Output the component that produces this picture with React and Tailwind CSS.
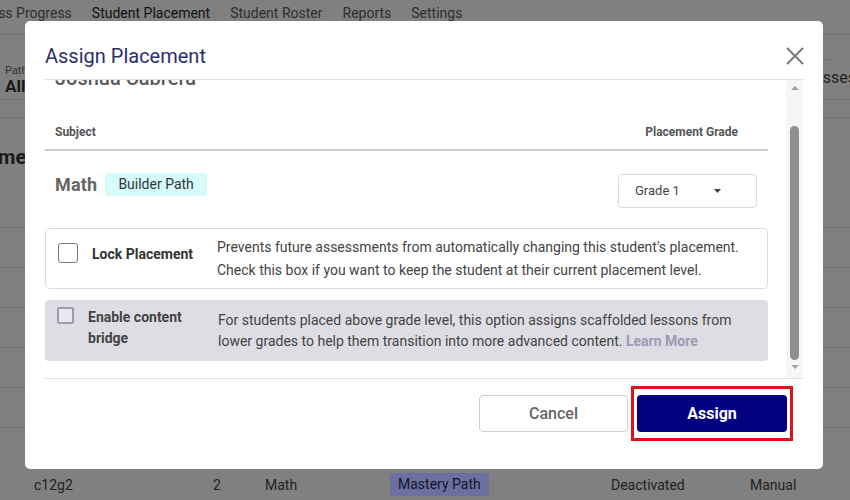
export default function App() {
  return (
    <div className="relative w-[850px] h-[500px] overflow-hidden bg-[#808080] font-['Roboto',sans-serif]">
      {/* background page (dimmed) */}
      <div className="flex flex-col h-full">
        <div className="h-[35px] shrink-0 border-b border-[#707070] flex items-start gap-5 -ml-[22px] pt-[4px] text-[14px] leading-[18px] text-[#2e2e2e] whitespace-nowrap">
          <span>Class Progress</span>
          <span className="text-[#111]">Student Placement</span>
          <span>Student Roster</span>
          <span>Reports</span>
          <span>Settings</span>
        </div>
        <div className="h-[65px] shrink-0 border-b border-[#707070] flex justify-between">
          <div className="pl-[5px] pt-[29px] flex flex-col">
            <span className="text-[11px] leading-[13px] text-[#333]">Path</span>
            <span className="text-[17px] leading-[18px] font-bold text-[#1a1a1a]">All</span>
          </div>
          <div className="flex flex-col">
            <div className="h-[25px] border-b border-[#707070] w-[30px]" />
            <span className="pt-[8px] -mr-[6px] text-[16px] leading-[20px] text-[#222]">Classes</span>
          </div>
        </div>
        <div className="h-[18px] shrink-0 border-b border-[#707070]" />
        <div className="h-[110px] shrink-0 border-b border-[#707070] pt-[25px] -ml-[52px] whitespace-nowrap">
          <span className="text-[20px] leading-[28px] font-bold text-[#1a1a1a]">Placement Summary</span>
        </div>
        <div className="h-[40px] shrink-0 border-b border-[#707070]" />
        <div className="h-[40px] shrink-0 border-b border-[#707070]" />
        <div className="h-[40px] shrink-0 border-b border-[#707070]" />
        <div className="h-[40px] shrink-0 border-b border-[#707070]" />
        <div className="h-[40px] shrink-0 border-b border-[#707070]" />
        <div className="h-[40px] shrink-0" />
        <div className="flex items-center pl-[34px] pt-[5px] text-[14px] leading-[20px] text-[#222] whitespace-nowrap">
          <span className="w-[179px]">c12g2</span>
          <span className="w-[52px]">2</span>
          <span className="w-[125px]">Math</span>
          <span className="w-[221px]">
            <span className="inline-block h-[23px] leading-[23px] px-[8px] rounded-[3px] bg-[#6c70a0] text-[#141428]">Mastery Path</span>
          </span>
          <span className="w-[139px]">Deactivated</span>
          <span>Manual</span>
        </div>
      </div>

      {/* modal */}
      <div className="absolute left-[25px] top-[21px] w-[798px] h-[448px] bg-white rounded-[5px] flex flex-col">
        <div className="mx-5 h-[59px] shrink-0 border-b border-[#e0e0e0] flex items-start justify-between pt-[21px]">
          <h2 className="text-[20px] leading-[28px] text-[#2d2e6e]">Assign Placement</h2>
          <svg className="mt-[5px] -mr-px" width="18" height="18" viewBox="0 0 18 18">
            <path d="M1 1 L17 17 M17 1 L1 17" stroke="#777" strokeWidth="1.8" fill="none" />
          </svg>
        </div>

        <div className="mx-5 h-[298px] shrink-0 flex">
          <div className="w-[723px] overflow-hidden flex flex-col">
            <div className="-mt-[16px] shrink-0 px-[10px] text-[20px] leading-[28px] font-medium text-[#5a5a5a]">
              Joshua Cabrera
            </div>
            <div className="shrink-0 flex justify-between pl-[10px] pr-[30px] pt-[32px] pb-[9px] border-b-2 border-[#cccccc] text-[12px] leading-[16px] font-bold text-[#555]">
              <span>Subject</span>
              <span>Placement Grade</span>
            </div>
            <div className="shrink-0 flex items-start justify-between pl-[10px] pr-[11px] pt-[22px]">
              <div className="flex items-center gap-2">
                <span className="text-[18px] leading-[23px] font-bold text-[#666] tracking-[0.2px]">Math</span>
                <span className="h-[23px] leading-[23px] px-[13px] rounded-[3px] bg-[#d5fbfb] text-[14px] text-[#333]">Builder Path</span>
              </div>
              <div className="mt-px w-[139px] h-[34px] border border-[#dcdcdc] rounded-[4px] flex items-center justify-between pl-[16px] pr-[35px] text-[13px] text-[#444]">
                <span>Grade 1</span>
                <svg width="7" height="4" viewBox="0 0 7 4">
                  <path d="M0 0 L7 0 L3.5 4 Z" fill="#444" />
                </svg>
              </div>
            </div>

            <div className="mt-[20px] h-[61px] shrink-0 border border-[#dcdcdc] rounded-[4px] flex">
              <div className="w-[171px] shrink-0 flex items-start pl-[12px] pt-[14px]">
                <div className="w-[20px] h-[20px] shrink-0 border-[1.5px] border-[#777] rounded-[3px]" />
                <span className="ml-[14px] mt-[2px] text-[14px] leading-[18px] font-bold text-[#333]">Lock Placement</span>
              </div>
              <div className="flex items-center text-[14px] leading-[23px] text-[#444] whitespace-nowrap">
                <p>
                  Prevents future assessments from automatically changing this student's placement.
                  <br />
                  Check this box if you want to keep the student at their current placement level.
                </p>
              </div>
            </div>

            <div className="mt-[11px] h-[61px] shrink-0 bg-[#dddde3] rounded-[4px] flex">
              <div className="w-[173px] shrink-0 flex items-start pl-[12px] pt-[7px]">
                <div className="w-[17px] h-[17px] shrink-0 border-[2.5px] border-[#9e9ab5] bg-[#e8e8ee] rounded-[2px]" />
                <span className="ml-[14px] text-[14px] leading-[21px] font-bold text-[#444]">
                  Enable content
                  <br />
                  bridge
                </span>
              </div>
              <div className="flex items-center text-[14px] leading-[21px] text-[#444] whitespace-nowrap">
                <p>
                  For students placed above grade level, this option assigns scaffolded lessons from
                  <br />
                  lower grades to help them transition into more advanced content.{" "}
                  <span className="font-bold text-[#9c9ab3]">Learn More</span>
                </p>
              </div>
            </div>
          </div>

          <div className="ml-[18px] w-[17px] shrink-0 bg-[#f6f6f6] flex flex-col items-center">
            <svg className="mt-[6px]" width="8" height="4" viewBox="0 0 8 4">
              <path d="M0 4 L8 4 L4 0 Z" fill="#a3a3a3" />
            </svg>
            <div className="mt-[36px] w-[9px] h-[234px] rounded-full bg-[#8f8f8f]" />
            <svg className="mt-[5px]" width="8" height="4" viewBox="0 0 8 4">
              <path d="M0 0 L8 0 L4 4 Z" fill="#a3a3a3" />
            </svg>
          </div>
        </div>

        <div className="mx-5 flex-1 border-t border-[#e0e0e0] flex justify-end items-start pt-[7px] pr-[10px] gap-[3px]">
          <div className="mt-[9px] w-[149px] h-[37px] border border-[#cfcfcf] rounded-[4px] flex items-center justify-center text-[16px] font-medium text-[#666]">
            Cancel
          </div>
          <div className="border-[3px] border-[#e5101c] px-[3px] py-[6px]">
            <div className="w-[150px] h-[37px] rounded-[4px] bg-[#000080] flex items-center justify-center text-[16px] font-bold text-white">
              Assign
            </div>
          </div>
        </div>
      </div>
    </div>
  );
}
